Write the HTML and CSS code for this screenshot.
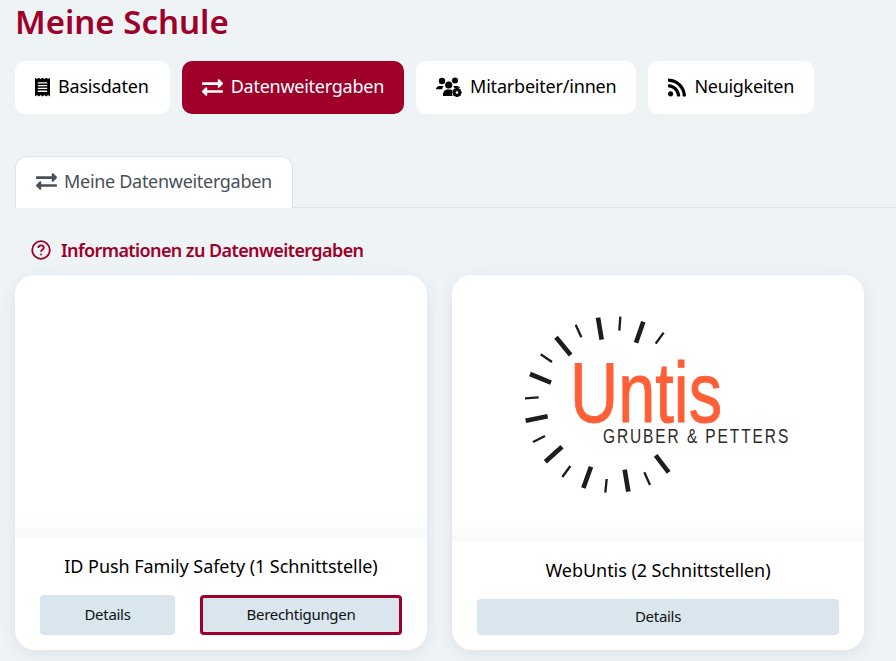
FILE: index.html
```html
<!DOCTYPE html>
<html lang="de">

<head>
    <meta charset="UTF-8">
    <title>Meine Schule</title>
    <link rel="stylesheet" href="styles.css">
</head>

<body>
    <h1>Meine Schule</h1>

    <!-- Hauptnavigation -->
    <nav class="pills">
        <a class="pill pill-first">
            <svg class="pill-icon" viewBox="0 0 16 20" width="15" height="20">
                <path fill="#000" d="M0 0l2 1.5L4 0l2 1.5L8 0l2 1.5L12 0l2 1.5L16 0v20l-2-1.5-2 1.5-2-1.5L8 20l-2-1.5L4 20l-2-1.5L0 20z"/>
                <path stroke="#fff" stroke-width="1.4" d="M3 5.500h10M3 8.500h10M3 11.500h10M3 14.500h10"/>
            </svg>
            Basisdaten
        </a>
        <a class="pill active">
            <svg class="pill-icon" viewBox="0 0 512 512" width="21" height="21">
                <path fill="currentColor" d="M0 168v-16c0-13.255 10.745-24 24-24h360V80c0-21.367 25.899-32.042 40.971-16.971l80 80c9.372 9.373 9.372 24.569 0 33.941l-80 80C409.956 271.982 384 261.456 384 240v-48H24c-13.255 0-24-10.745-24-24zm488 152H128v-48c0-21.314-25.862-32.08-40.971-16.971l-80 80c-9.372 9.373-9.372 24.569 0 33.941l80 80C102.057 463.997 128 453.437 128 432v-48h360c13.255 0 24-10.745 24-24v-16c0-13.255-10.745-24-24-24z"/>
            </svg>
            Datenweitergaben
        </a>
        <a class="pill">
            <svg class="pill-icon" viewBox="0 0 26 20" width="26" height="20">
                <circle cx="6" cy="4" r="3.2"/>
                <circle cx="19" cy="3.6" r="3"/>
                <circle cx="12.7" cy="8" r="3.6"/>
                <path d="M0 12.5C0 10.5 1.5 9 3.5 9h4.2c-.9 1-1.4 2-1.4 3.2H0zM7 18c0-3.2 2-5.4 4.6-5.4h2.6c1 0 1.7.2 2.4.6-.8 1.300-.8 3.800 0 5.800H7zM17 9h4c1.500 0 2.800 1 3.200 2.300-1.800-1-4-.7-5.500.5-.3-1.100-.9-2-1.700-2.800z"/>
                <circle cx="21" cy="15.500" r="3.300" fill="none" stroke="#000" stroke-width="2.200"/>
                <path stroke="#000" stroke-width="1.500" d="M21 10.800v9.400M16.300 15.500h9.400M17.700 12.200l6.600 6.600M24.300 12.200l-6.600 6.600"/>
                <circle cx="21" cy="15.500" r="1.300" fill="#fff"/>
            </svg>
            Mitarbeiter/innen
        </a>
        <a class="pill pill-news">
            <svg class="pill-icon" viewBox="0 0 448 512" width="18" height="21">
                <path d="M128.081 415.959c0 35.369-28.672 64.041-64.041 64.041S0 451.328 0 415.959s28.672-64.041 64.041-64.041 64.04 28.673 64.04 64.041zm175.66 47.25c-8.354-154.6-132.185-278.587-286.95-286.95C7.656 175.765 0 183.105 0 192.253v48.069c0 8.415 6.49 15.472 14.887 16.018 111.832 7.284 201.473 96.702 208.772 208.772.547 8.397 7.604 14.887 16.018 14.887h48.069c9.149.001 16.489-7.655 15.995-16.79zm144.249.288C439.596 229.677 251.465 40.445 16.503 32.01 7.473 31.686 0 38.981 0 48.016v48.068c0 8.625 6.835 15.645 15.453 15.999 191.179 7.839 344.627 161.316 352.465 352.465.353 8.618 7.373 15.453 15.999 15.453h48.068c9.034-.001 16.329-7.474 16.005-16.504z"/>
            </svg>
            Neuigkeiten
        </a>
    </nav>

    <!-- Tabs -->
    <div class="tabs">
        <a class="tab">
            <svg viewBox="0 0 512 512" width="21" height="21">
                <path fill="currentColor" d="M0 168v-16c0-13.255 10.745-24 24-24h360V80c0-21.367 25.899-32.042 40.971-16.971l80 80c9.372 9.373 9.372 24.569 0 33.941l-80 80C409.956 271.982 384 261.456 384 240v-48H24c-13.255 0-24-10.745-24-24zm488 152H128v-48c0-21.314-25.862-32.08-40.971-16.971l-80 80c-9.372 9.373-9.372 24.569 0 33.941l80 80C102.057 463.997 128 453.437 128 432v-48h360c13.255 0 24-10.745 24-24v-16c0-13.255-10.745-24-24-24z"/>
            </svg>
            Meine Datenweitergaben
        </a>
    </div>

    <a class="info">
        <svg viewBox="0 0 20 20" width="20" height="20" fill="none" stroke="currentColor">
            <circle cx="10" cy="10" r="8.800" stroke-width="1.800"/>
            <path stroke-width="1.800" d="M7.300 8c0-1.600 1.200-2.600 2.800-2.600s2.700 1 2.700 2.300c0 2-2.800 2-2.800 4"/>
            <circle cx="10" cy="14.500" r=".7" stroke-width="1"/>
        </svg>
        Informationen zu Datenweitergaben
    </a>

    <!-- Karten -->
    <section class="cards">
        <article class="card">
            <div class="card-image"></div>
            <h2>ID Push Family Safety (1 Schnittstelle)</h2>
            <div class="card-actions">
                <button class="btn btn-details">Details</button>
                <button class="btn btn-marked">Berechtigungen</button>
            </div>
        </article>

        <article class="card">
            <div class="card-image tall">
                <svg class="logo" viewBox="0 0 870 585" width="290" height="195">
                    <g stroke="#1d1d1b" stroke-width="14">
                        <path d="M264 38L275 104M400 50L378 113M476 502L437 451M344 494L355 560M243 485L220 549M156 425L106 470M113 334L47 347M60 207L123 233M138 97L182 150"/>
                    </g>
                    <g stroke="#1d1d1b" stroke-width="7">
                        <path d="M331 35L328 77M461 83L437 116M403 502L420 540M290 522L286 563M181 483L157 516M105 393L69 411M86 277L45 280M92 148L126 171M197 59L214 97"/>
                    </g>
                    <text class="logo-name" x="180" y="350" font-size="254" textLength="456" lengthAdjust="spacingAndGlyphs">Untis</text>
                    <text class="logo-sub" transform="translate(279 413) scale(.75 1)" font-size="62" textLength="741" lengthAdjust="spacing">GRUBER &amp; PETTERS</text>
                </svg>
            </div>
            <h2>WebUntis (2 Schnittstellen)</h2>
            <div class="card-actions">
                <button class="btn btn-full">Details</button>
            </div>
        </article>
    </section>
</body>

</html>
```

FILE: styles.css
```css
body {
    font-family: "Noto Sans", sans-serif;
    background: #eef3f6;
    color: #000;
    margin: 0;
    padding: 0 15px;
    height: 661px;
    overflow: hidden;
}

h1 {
    margin: 0;
    color: #9e0029;
    font-size: 33px;
    font-weight: 600;
    line-height: 44px;
}

/* Hauptnavigation */
.pills {
    display: flex;
    gap: 12px;
    margin-top: 17px;
}

.pill {
    display: flex;
    align-items: center;
    gap: 8px;
    height: 53px;
    box-sizing: border-box;
    padding: 0 20px 4px;
    background: #fff;
    border-radius: 10px;
    font-size: 18px;
    letter-spacing: -0.2px;
}

.pill svg {
    fill: #000;
    margin-top: 3px;
}

.pill-first {
    padding-right: 21px;
}

.pill.active {
    background: #9e0029;
    color: #fff;
    letter-spacing: -0.25px;
}

.pill-news {
    letter-spacing: -0.3px;
}

/* Tabs */
.tabs {
    display: flex;
    margin: 42px -15px 0 0;
    border-bottom: 1px solid #dde3ea;
    height: 51px;
}

.tab {
    display: flex;
    align-items: center;
    gap: 7px;
    height: 52px;
    box-sizing: border-box;
    padding: 0 20px 3px;
    background: #fff;
    border: 1px solid #dde3ea;
    border-bottom: none;
    border-radius: 12px 12px 0 0;
    color: #495057;
    font-size: 18px;
    letter-spacing: -0.3px;
}

.info {
    display: flex;
    align-items: center;
    gap: 10px;
    height: 28px;
    margin: 28px 0 11px 16px;
    color: #9e0029;
    font-size: 18px;
    font-weight: 600;
    letter-spacing: -0.6px;
}

/* Karten */
.cards {
    display: grid;
    grid-template-columns: 412px 412px;
    gap: 25px;
}

.card {
    display: flex;
    flex-direction: column;
    height: 375px;
    background: #fff;
    border-radius: 20px;
    box-shadow: 0 4px 16px rgba(60, 90, 120, 0.1);
    overflow: hidden;
}

.card-image {
    height: 262px;
    flex-shrink: 0;
    background: linear-gradient(to bottom, #fff 92%, #f9f9f9);
}

.card-image.tall {
    height: 266px;
    display: flex;
    justify-content: center;
    padding: 30px 6px 0 0;
    box-sizing: border-box;
}

.logo-name {
    font-family: "Liberation Sans", sans-serif;
    fill: #ff5f36;
    stroke: #ff5f36;
    stroke-width: 3;
}

.logo-sub {
    font-family: "Liberation Sans", sans-serif;
    fill: #2b2b2b;
}

.card h2 {
    margin: 16px 0 0;
    font-size: 18px;
    font-weight: 400;
    line-height: 26px;
    text-align: center;
    letter-spacing: -0.05px;
}

.card-actions {
    display: flex;
    gap: 25px;
    flex: 1;
    padding: 16px 25px 15px;
}

.btn {
    font-family: inherit;
    font-size: 15px;
    letter-spacing: -0.3px;
    color: #111;
    background: #d9e6ee;
    border: none;
    border-radius: 4px;
    padding: 0 0 2px;
}

.btn-details {
    width: 135px;
}

.btn-marked {
    width: 202px;
    border: 3px solid #9e0029;
}

.btn-full {
    width: 100%;
}
```
